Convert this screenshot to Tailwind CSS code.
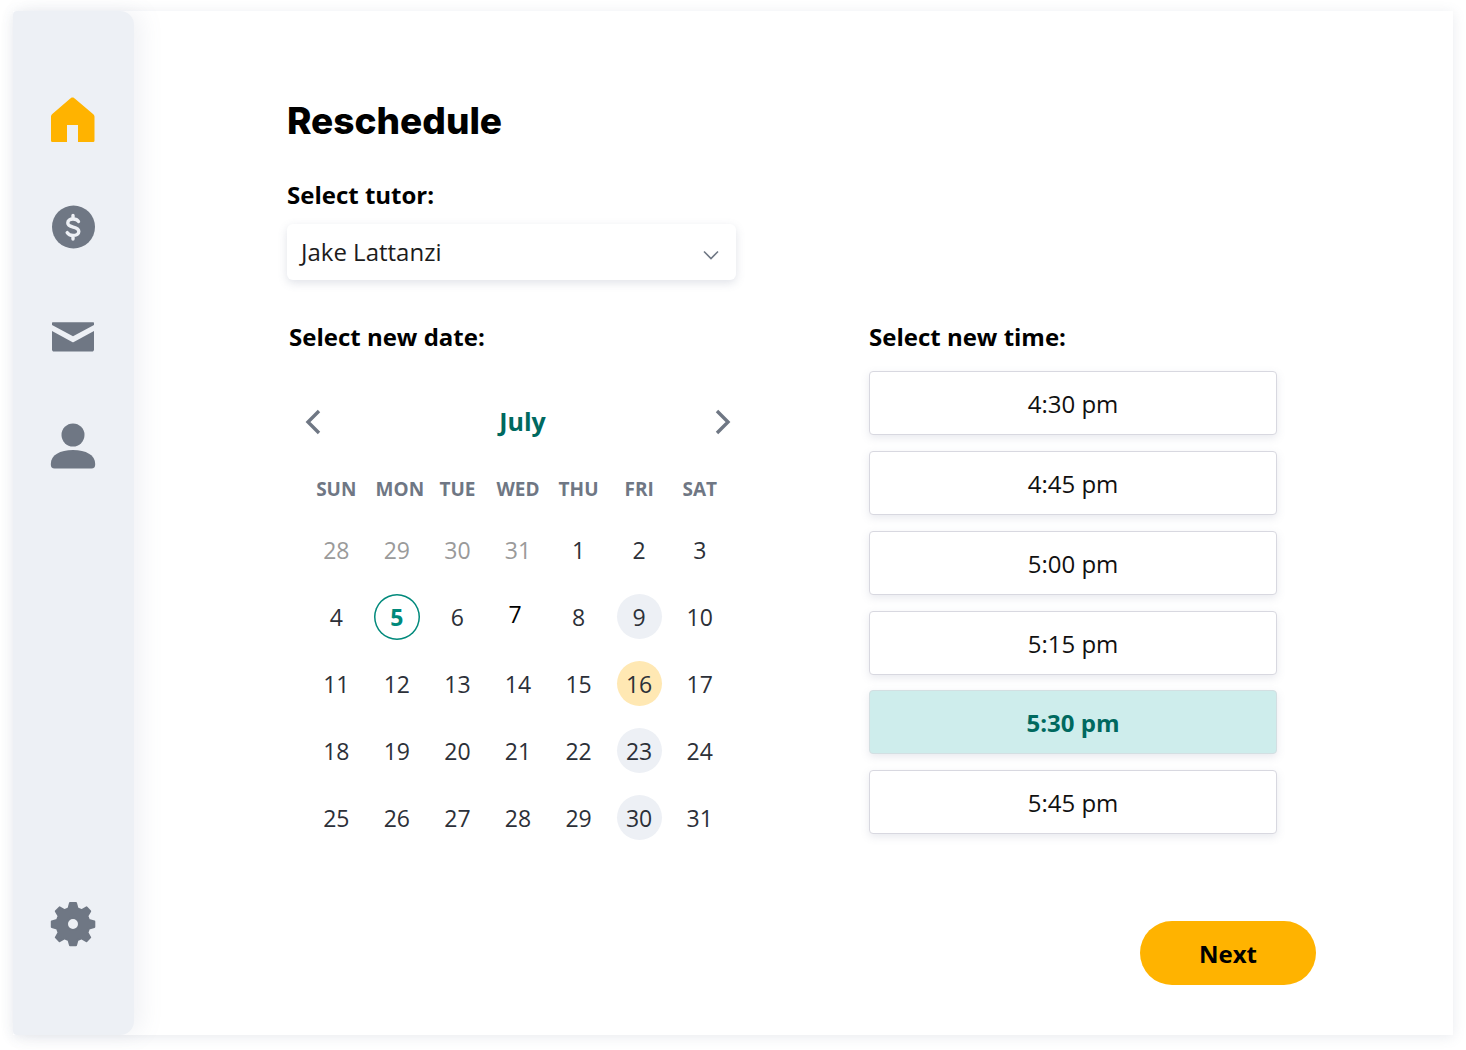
<!doctype html>
<html><head><meta charset="utf-8"><script src="https://cdn.jsdelivr.net/npm/@tailwindcss/browser@4"></script></head>
<body class="bg-white font-['Open_Sans',sans-serif] overflow-hidden">
<div class="w-[1466px] h-[1050px] pt-[11px] pl-[13px]">
<div class="w-[1440px] h-[1024px] flex bg-white shadow-[0_2px_12px_rgba(100,110,140,0.14)]">
  <aside class="w-[121px] h-full pr-[1px] flex flex-col items-center bg-[#edf0f5] rounded-r-[14px] rounded-l-[4px] shadow-[8px_0_22px_rgba(120,130,160,0.10)] shrink-0">
    <svg class="mt-[86px] w-[46px] h-[46px]" viewBox="0 0 46 46"><path fill="#ffb300" d="M22.5 0.5 C21.5 0.5 21 1 20 1.7 L2.3 17 C1.2 18 1 18.8 1 20 V43.5 C1 44.6 1.6 45 3 45 H17 V28 H28 V45 H42.5 C43.9 45 44.5 44.6 44.5 43.5 V20 C44.5 18.8 44.2 18 43 17 L25 1.7 C24 1 23.5 0.5 22.5 0.5Z"/></svg>
    <svg class="mt-[62px] w-[44px] h-[44px]" viewBox="0 0 44 44"><circle cx="22.5" cy="22" r="21.5" fill="#6f7784"/><path fill="none" stroke="#edf0f5" stroke-width="3.4" stroke-linecap="round" d="M27.5 16.5 C26.5 14.8 24.5 14 22 14 C18.8 14 16.8 15.6 16.8 18 C16.8 23.5 27.8 20.6 27.8 26.4 C27.8 28.8 25.5 30.4 22 30.4 C19.3 30.4 17.3 29.4 16.2 27.6 M22 10.5 V13.5 M22 31 V34"/></svg>
    <svg class="mt-[73px] w-[44px] h-[30px]" viewBox="0 0 44 30"><path fill="#6f7784" d="M1 9 V27.5 C1 28.8 1.8 29.6 3 29.6 H41 C42.2 29.6 43 28.8 43 27.5 V9 L22.8 20 C22.2 20.3 21.8 20.3 21.2 20 Z M2 0.2 C1.3 0.2 1 .6 1 1.2 V3 L22 14.2 L43 3 V1.2 C43 .6 42.7 .2 42 .2 Z"/></svg>
    <svg class="mt-[71px] w-[46px] h-[46px]" viewBox="0 0 46 46"><circle cx="23" cy="12" r="11.5" fill="#6f7784"/><path fill="#6f7784" d="M0.8 41 C0.8 32 10 27 23 27 C36 27 45.2 32 45.2 41 C45.2 44.4 44 45.6 41.5 45.6 H4.5 C2 45.6 0.8 44.4 0.8 41Z"/></svg>
    <svg class="mt-[432px] w-[46px] h-[46px]" viewBox="0 0 46 46"><path fill="#6f7784" stroke="#6f7784" stroke-width="2" stroke-linejoin="round" fill-rule="evenodd" d="M20 2 H26 L27.5 7.5 L31.8 9.2 L36.6 6.4 L40.2 10.2 L37.4 15 L39 19 L44.3 20.5 V26 L39 27.5 L37.4 31.6 L40.2 36.4 L36.4 40.2 L31.6 37.4 L27.5 39 L26 44.3 H20 L18.5 39 L14.4 37.4 L9.6 40.2 L5.8 36.4 L8.6 31.6 L7 27.5 L1.8 26 V20.5 L7 19 L8.6 15 L5.8 10.2 L9.6 6.4 L14.4 9.2 L18.5 7.5 Z M23 17 A6 6 0 1 0 23 29 A6 6 0 1 0 23 17 Z"/></svg>
  </aside>
  <main class="pl-[153px] pt-[85px] flex-1">
    <h1 class="h-[50px] leading-[50px] text-[37px] font-extrabold text-black font-['Inter',sans-serif] tracking-[0px]">Reschedule</h1>
    <p class="mt-[33px] h-[32px] leading-[32px] text-[24px] font-bold text-black">Select tutor:</p>
    <div class="mt-[13px] w-[449px] h-[56px] flex items-center justify-between pl-[14px] pr-[17px] bg-white rounded-[6px] shadow-[0_3px_10px_rgba(100,110,140,0.2)]">
      <span class="text-[24px] text-[#1c1c1c]">Jake Lattanzi</span>
      <svg class="w-[16px] h-[10px] mt-[5px]" viewBox="0 0 16 10"><path d="M1 1.5 L8 8.5 L15 1.5" fill="none" stroke="#6f7784" stroke-width="1.6"/></svg>
    </div>
    <div class="mt-[41px] flex">
      <section class="w-[582px]">
        <p class="ml-[2px] h-[32px] leading-[32px] text-[24px] font-bold text-black">Select new date:</p>
        <div class="mt-[49px] w-[449px] h-[40px] pl-[18px] pr-[5px] flex items-center justify-between">
          <svg class="w-[16px] h-[26px]" viewBox="0 0 16 26"><path d="M14 2 L3 13 L14 24" fill="none" stroke="#6f7784" stroke-width="3.4"/></svg>
          <span class="text-[25px] font-bold text-[#00695f] ml-[9px]">July</span>
          <svg class="w-[16px] h-[26px]" viewBox="0 0 16 26"><path d="M2 2 L13 13 L2 24" fill="none" stroke="#6f7784" stroke-width="3.4"/></svg>
        </div>
        <div class="mt-[32px] ml-[19px] w-[424px] h-[30px] grid grid-cols-7 text-center text-[19px] leading-[30px] font-bold text-[#6f7784]">
          <span>SUN</span><span class="translate-x-[3px]">MON</span><span>TUE</span><span>WED</span><span>THU</span><span>FRI</span><span>SAT</span>
        </div>
        <div class="mt-[12px] ml-[19px] w-[424px] grid grid-cols-7 auto-rows-[67px] place-items-center text-[23px] text-[#2c3038] [&>span]:pt-[2px]">
          <span class="text-[#9a9a9a]">28</span><span class="text-[#9a9a9a]">29</span><span class="text-[#9a9a9a]">30</span><span class="text-[#9a9a9a]">31</span><span>1</span><span>2</span><span>3</span>
          <span>4</span><span class="w-[46px] h-[46px] rounded-full shadow-[inset_0_0_0_1.5px_#00897b] flex items-center justify-center font-bold text-[#00897b]">5</span><span>6</span><span class="-translate-x-[3px] -translate-y-[3px] text-black">7</span><span>8</span><span class="w-[45px] h-[45px] rounded-full bg-[#edf0f5] flex items-center justify-center">9</span><span>10</span>
          <span>11</span><span>12</span><span>13</span><span>14</span><span>15</span><span class="w-[45px] h-[45px] rounded-full bg-[#ffe8b3] flex items-center justify-center">16</span><span>17</span>
          <span>18</span><span>19</span><span>20</span><span>21</span><span>22</span><span class="w-[45px] h-[45px] rounded-full bg-[#edf0f5] flex items-center justify-center">23</span><span>24</span>
          <span>25</span><span>26</span><span>27</span><span>28</span><span>29</span><span class="w-[45px] h-[45px] rounded-full bg-[#edf0f5] flex items-center justify-center">30</span><span>31</span>
        </div>
      </section>
      <section class="w-[408px]">
        <p class="h-[32px] leading-[32px] text-[24px] font-bold text-black">Select new time:</p>
        <div class="mt-[18px] flex flex-col gap-[16px] text-[24px] text-[#111]">
          <div class="h-[64px] pt-[2px] flex items-center justify-center rounded-[4px] bg-white border border-[#d8d8e0] shadow-[0_3px_8px_rgba(100,110,140,0.15)]">4:30 pm</div>
          <div class="h-[64px] pt-[2px] flex items-center justify-center rounded-[4px] bg-white border border-[#d8d8e0] shadow-[0_3px_8px_rgba(100,110,140,0.15)]">4:45 pm</div>
          <div class="h-[64px] pt-[2px] flex items-center justify-center rounded-[4px] bg-white border border-[#d8d8e0] shadow-[0_3px_8px_rgba(100,110,140,0.15)]">5:00 pm</div>
          <div class="h-[64px] pt-[2px] flex items-center justify-center rounded-[4px] bg-white border border-[#d8d8e0] shadow-[0_3px_8px_rgba(100,110,140,0.15)]">5:15 pm</div>
          <div class="-mt-[1px] h-[64px] pt-[2px] flex items-center justify-center rounded-[4px] bg-[#ceedec] border border-[#d3dfe2] font-bold text-[#00695f] shadow-[0_3px_8px_rgba(100,110,140,0.15)]">5:30 pm</div>
          <div class="h-[64px] pt-[2px] flex items-center justify-center rounded-[4px] bg-white border border-[#d8d8e0] shadow-[0_3px_8px_rgba(100,110,140,0.15)]">5:45 pm</div>
        </div>
      </section>
    </div>
    <div class="mt-[70px] w-[1029px] flex justify-end">
      <button class="w-[176px] h-[64px] pt-[2px] rounded-full bg-[#ffb300] text-[24px] font-bold text-black">Next</button>
    </div>
  </main>
</div>
</div>
</body></html>
